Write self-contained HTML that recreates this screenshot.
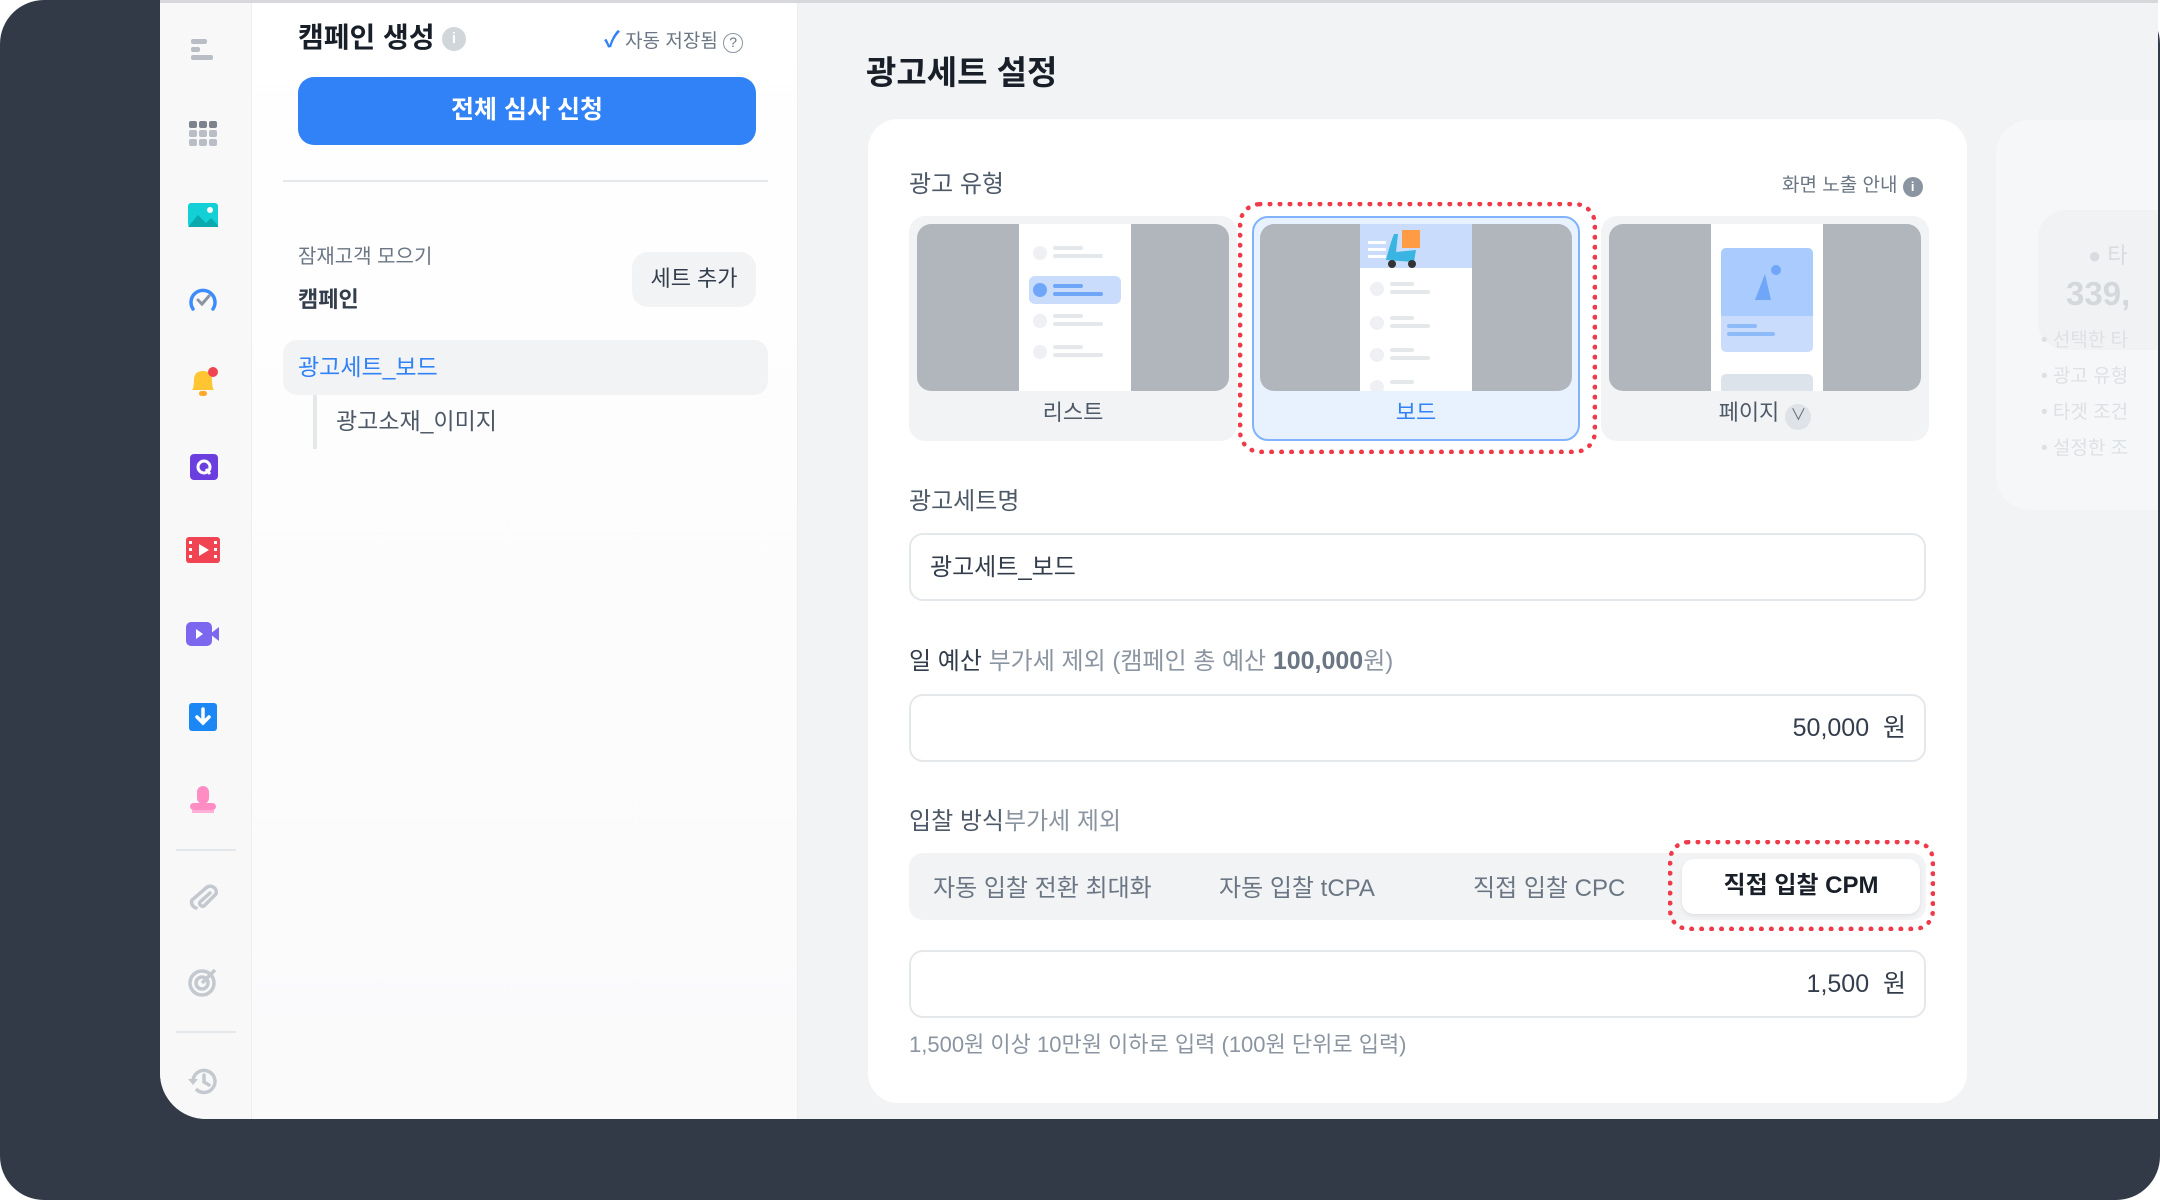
<!DOCTYPE html><html><head><meta charset="utf-8"><style>
*{box-sizing:border-box;margin:0;padding:0}
body{width:2160px;height:1200px;background:#fff;font-family:"Liberation Sans","Noto Sans CJK KR",sans-serif;position:relative;overflow:hidden}
.a{position:absolute}
.frame{left:0;top:0;width:2160px;height:1200px;background:#323a48;border-radius:44px}
.win{left:160px;top:0;width:1998px;height:1119px;background:#f2f3f5;border-bottom-left-radius:46px;overflow:hidden}
.side{left:0;top:0;width:92px;height:1119px;background:#f8f8f9;border-right:1px solid #eceef0}
.lp{left:92px;top:0;width:546px;height:1119px;background:linear-gradient(#fff,#fafafb);border-right:1px solid #eceef0}
.t{white-space:nowrap}
.card{left:708px;top:119px;width:1099px;height:984px;background:#fff;border-radius:30px}
.lab{font-size:24px;color:#4e5968}
.inp{left:41px;width:1017px;height:68px;border:2px solid #e5e8eb;border-radius:14px;background:#fff}
.tile{top:97px;width:328px;height:225px;background:#f2f3f5;border-radius:16px}
.img{left:8px;top:8px;width:312px;height:167px;background:#b1b6bd;border-radius:14px;overflow:hidden}
.col{position:absolute;left:102px;top:0;width:112px;height:167px;background:#fff}
.tl{position:absolute;left:0;width:100%;top:172px;height:50px;line-height:50px;text-align:center;font-size:22px;color:#4e5968}
.dot{position:absolute;width:14px;height:14px;border-radius:50%;background:#eef0f3}
.ln{position:absolute;height:4px;background:#e5e8eb;border-radius:2px}
</style></head><body>
<div class="a frame"></div>
<div class="a win">
 <div class="a side">
  <svg class="a" style="left:29px;top:36px" width="28" height="28"><rect x="2" y="3" width="16" height="5" rx="2" fill="#b9bec6"/><rect x="2" y="11" width="9" height="5" rx="2" fill="#b9bec6"/><rect x="2" y="19" width="22" height="5" rx="2" fill="#b9bec6"/></svg>
  <svg class="a" style="left:29px;top:121px" width="28" height="26"><g fill="#b9bec6"><rect x="0" y="0" width="8" height="7" rx="2" fill="#7d838c"/><rect x="10" y="0" width="8" height="7" rx="2" fill="#7d838c"/><rect x="20" y="0" width="8" height="7" rx="2" fill="#7d838c"/><rect x="0" y="9" width="8" height="7" rx="2"/><rect x="10" y="9" width="8" height="7" rx="2"/><rect x="20" y="9" width="8" height="7" rx="2"/><rect x="0" y="18" width="8" height="7" rx="2"/><rect x="10" y="18" width="8" height="7" rx="2"/><rect x="20" y="18" width="8" height="7" rx="2"/></g></svg>
  <svg class="a" style="left:28px;top:203px" width="30" height="26"><rect width="30" height="24" rx="3" fill="#13d0d6"/><path d="M0 24 L10 12 L18 20 L23 15 L30 22 V24Z" fill="#0aa9ae"/><circle cx="22" cy="7" r="3" fill="#fff"/></svg>
  <svg class="a" style="left:28px;top:285px" width="30" height="30"><path d="M5 24 A12 12 0 1 1 25 24" fill="none" stroke="#3d8bfd" stroke-width="3.5" stroke-linecap="round"/><path d="M10 15 L14 19 L21 11" fill="none" stroke="#8b95a1" stroke-width="3" stroke-linecap="round"/></svg>
  <svg class="a" style="left:28px;top:366px" width="32" height="34"><path d="M4 24 Q6 22 6 14 Q6 5 15 5 Q24 5 24 14 Q24 22 26 24Z" fill="#ffc533"/><rect x="11" y="25" width="8" height="5" rx="2.5" fill="#ffa826"/><circle cx="25" cy="6" r="5" fill="#f04452"/></svg>
  <svg class="a" style="left:30px;top:454px" width="28" height="26"><rect width="28" height="26" rx="4" fill="#6b3ee0"/><circle cx="14" cy="13" r="6" fill="none" stroke="#fff" stroke-width="3"/><path d="M16 15 L20 20" stroke="#fff" stroke-width="3"/></svg>
  <svg class="a" style="left:26px;top:537px" width="34" height="26"><rect width="34" height="26" rx="3" fill="#f04452"/><path d="M13 7 L23 13 L13 19Z" fill="#fff"/><g fill="#fff"><rect x="3" y="4" width="3" height="3"/><rect x="3" y="11" width="3" height="3"/><rect x="3" y="18" width="3" height="3"/><rect x="28" y="4" width="3" height="3"/><rect x="28" y="11" width="3" height="3"/><rect x="28" y="18" width="3" height="3"/></g></svg>
  <svg class="a" style="left:26px;top:622px" width="34" height="24"><rect width="26" height="24" rx="5" fill="#7c68ee"/><path d="M24 12 L33 5 V19Z" fill="#7c68ee"/><path d="M10 7 L17 12 L10 17Z" fill="#fff"/></svg>
  <svg class="a" style="left:29px;top:703px" width="28" height="28"><rect width="28" height="28" rx="3" fill="#1b87f5"/><path d="M14 6 V20 M8 14 L14 20 L20 14" fill="none" stroke="#fff" stroke-width="3.5" stroke-linecap="round"/></svg>
  <svg class="a" style="left:28px;top:784px" width="30" height="30"><rect x="9" y="2" width="12" height="18" rx="6" fill="#ff8dc3"/><rect x="2" y="19" width="26" height="7" rx="3.5" fill="#ff8dc3"/><rect x="4" y="26" width="22" height="3" fill="#ffb0d8"/></svg>
  <div class="a" style="left:16px;top:849px;width:60px;height:2px;background:#e5e8eb"></div>
  <svg class="a" style="left:26px;top:882px" width="36" height="32"><path d="M6 26 A6 6 0 0 1 2 18 L16 6 A6 6 0 0 1 26 12 L14 24 A3 3 0 0 1 10 20 L20 11" fill="none" stroke="#c4c9d0" stroke-width="3.5" stroke-linecap="round" transform="translate(4,0)"/></svg>
  <svg class="a" style="left:27px;top:966px" width="32" height="32"><circle cx="15" cy="17" r="12" fill="none" stroke="#c4c9d0" stroke-width="3.5"/><circle cx="15" cy="17" r="6" fill="none" stroke="#c4c9d0" stroke-width="3.5"/><path d="M15 17 L28 4" stroke="#c4c9d0" stroke-width="3.5"/></svg>
  <div class="a" style="left:16px;top:1031px;width:60px;height:2px;background:#e5e8eb"></div>
  <svg class="a" style="left:27px;top:1066px" width="32" height="30"><path d="M6 15 A11 11 0 1 1 9 23" fill="none" stroke="#c4c9d0" stroke-width="3.5"/><path d="M1 13 L6 19 L11 13Z" fill="#c4c9d0"/><path d="M17 9 V16 L22 19" fill="none" stroke="#c4c9d0" stroke-width="3.5" stroke-linecap="round"/></svg>
 </div>
 <div class="a lp">
  <div class="a t" style="left:46px;top:16px;font-size:28px;font-weight:700;color:#191f28">캠페인 생성</div>
  <div class="a" style="left:190px;top:27px;width:24px;height:24px;border-radius:50%;background:#d1d6db;color:#fff;font-size:15px;font-weight:700;text-align:center;line-height:24px">i</div>
  <div class="a t" style="left:352px;top:22px;font-size:19px;color:#6b7684"><span style="color:#3182f6;font-weight:700;font-size:22px">✓</span> 자동 저장됨 <span style="display:inline-block;width:20px;height:20px;border:1.5px solid #8b95a1;border-radius:50%;font-size:14px;text-align:center;line-height:17px">?</span></div>
  <div class="a" style="left:46px;top:77px;width:458px;height:68px;background:#3182f6;border-radius:16px;color:#fff;font-size:25px;font-weight:700;text-align:center;line-height:66px">전체 심사 신청</div>
  <div class="a" style="left:31px;top:180px;width:485px;height:2px;background:#e5e8eb"></div>
  <div class="a t" style="left:46px;top:240px;font-size:20px;color:#6b7684">잠재고객 모으기</div>
  <div class="a t" style="left:46px;top:282px;font-size:22px;font-weight:700;color:#333d4b">캠페인</div>
  <div class="a" style="left:380px;top:252px;width:124px;height:55px;background:#f2f3f5;border-radius:16px;font-size:22px;color:#333d4b;text-align:center;line-height:53px">세트 추가</div>
  <div class="a" style="left:31px;top:340px;width:485px;height:55px;background:#f2f3f5;border-radius:14px"></div>
  <div class="a t" style="left:46px;top:348px;font-size:23px;color:#3182f6">광고세트_보드</div>
  <div class="a" style="left:61px;top:395px;width:4px;height:54px;background:#e5e8eb"></div>
  <div class="a t" style="left:84px;top:402px;font-size:23px;color:#4e5968">광고소재_이미지</div>
 </div>
 <div class="a t" style="left:706px;top:46px;font-size:33px;font-weight:700;color:#191f28">광고세트 설정</div>
 <div class="a" style="left:1836px;top:120px;width:200px;height:390px;background:#f6f7f8;border-radius:34px">
  <div class="a" style="left:42px;top:90px;width:160px;height:140px;background:#f1f2f4;border-radius:28px"></div>
  <div class="a t" style="left:92px;top:118px;font-size:22px;color:#d8dbe0">● 타</div>
  <div class="a t" style="left:70px;top:155px;font-size:33px;font-weight:700;color:#d4d7dc">339,</div>
  <div class="a t" style="left:45px;top:203px;font-size:19px;line-height:36px;color:#dde0e4">• 선택한 타<br>• 광고 유형<br>• 타겟 조건<br>• 설정한 조</div>
 </div>
 <div class="a card">
  <div class="a t lab" style="left:41px;top:45px">광고 유형</div>
  <div class="a t" style="left:914px;top:51px;font-size:19px;color:#6b7684">화면 노출 안내 <span style="display:inline-block;width:20px;height:20px;border-radius:50%;background:#8b95a1;color:#fff;font-size:13px;font-weight:700;text-align:center;line-height:20px">i</span></div>
  <div class="a tile" style="left:41px">
   <div class="a img"><div class="col">
    <div class="dot" style="left:14px;top:22px"></div><div class="ln" style="left:34px;top:22px;width:30px"></div><div class="ln" style="left:34px;top:30px;width:50px"></div>
    <div style="position:absolute;left:10px;top:52px;width:92px;height:28px;background:#c9dcfb;border-radius:6px"></div>
    <div class="dot" style="left:14px;top:59px;background:#6fa6f8"></div><div class="ln" style="left:34px;top:60px;width:30px;background:#6fa6f8"></div><div class="ln" style="left:34px;top:68px;width:50px;background:#6fa6f8"></div>
    <div class="dot" style="left:14px;top:90px"></div><div class="ln" style="left:34px;top:90px;width:30px"></div><div class="ln" style="left:34px;top:98px;width:50px"></div>
    <div class="dot" style="left:14px;top:121px"></div><div class="ln" style="left:34px;top:121px;width:30px"></div><div class="ln" style="left:34px;top:129px;width:50px"></div>
   </div></div>
   <div class="tl">리스트</div>
  </div>
  <div class="a tile" style="left:384px;background:#e8f2fe;border:2px solid #80b3fb">
   <div class="a img" style="left:6px;top:6px"><div class="col" style="left:100px">
    <div style="position:absolute;left:0;top:0;width:112px;height:44px;background:#c9dcfb"></div>
    <svg style="position:absolute;left:4px;top:0" width="104" height="44"><rect x="4" y="17" width="18" height="3" fill="#fff"/><rect x="4" y="24" width="18" height="3" fill="#fff"/><rect x="4" y="31" width="18" height="3" fill="#fff"/><path d="M22 36 Q26 20 30 10 L34 10 L32 28 L52 26 L50 38Z" fill="#3ab4e0"/><rect x="38" y="6" width="18" height="18" fill="#ff9a45"/><circle cx="28" cy="40" r="4" fill="#333"/><circle cx="48" cy="40" r="4" fill="#333"/></svg>
    <div class="dot" style="left:10px;top:58px"></div><div class="ln" style="left:30px;top:58px;width:24px"></div><div class="ln" style="left:30px;top:66px;width:40px"></div>
    <div class="dot" style="left:10px;top:92px"></div><div class="ln" style="left:30px;top:92px;width:24px"></div><div class="ln" style="left:30px;top:100px;width:40px"></div>
    <div class="dot" style="left:10px;top:124px"></div><div class="ln" style="left:30px;top:124px;width:24px"></div><div class="ln" style="left:30px;top:132px;width:40px"></div>
    <div class="dot" style="left:10px;top:156px"></div><div class="ln" style="left:30px;top:156px;width:24px"></div>
   </div></div>
   <div class="tl" style="color:#3182f6;top:170px">보드</div>
  </div>
  <div class="a" style="left:370px;top:83px;width:359px;height:252px;border:5px dotted #ef3a4a;border-radius:22px"></div>
  <div class="a tile" style="left:733px">
   <div class="a img"><div class="col" style="left:102px">
    <div style="position:absolute;left:10px;top:24px;width:92px;height:104px;background:#c9dcfb;border-radius:5px"></div>
    <div style="position:absolute;left:10px;top:24px;width:92px;height:68px;background:#a9cbfd;border-radius:5px 5px 0 0"></div>
    <svg style="position:absolute;left:10px;top:24px" width="92" height="68"><path d="M34 52 L44 26 L50 52Z" fill="#6fa6f8"/><circle cx="55" cy="22" r="5" fill="#6fa6f8"/></svg>
    <div class="ln" style="left:16px;top:100px;width:30px;background:#8dbaf9"></div><div class="ln" style="left:16px;top:108px;width:48px;background:#8dbaf9"></div>
    <div style="position:absolute;left:10px;top:150px;width:92px;height:20px;background:#dde3ea;border-radius:5px"></div>
   </div></div>
   <div class="tl">페이지 <span style="display:inline-block;width:26px;height:26px;border-radius:50%;background:#dfe2e6;font-size:16px;line-height:24px;vertical-align:0;color:#6b7684">∨</span></div>
  </div>
  <div class="a t lab" style="left:41px;top:362px">광고세트명</div>
  <div class="a inp" style="top:414px"><div class="a t" style="left:19px;top:12px;font-size:24px;color:#333d4b">광고세트_보드</div></div>
  <div class="a t lab" style="left:41px;top:522px"><span style="color:#333d4b">일 예산</span> <span style="color:#8b95a1">부가세 제외 (캠페인 총 예산 </span> <span style="color:#6b7684;font-weight:700;font-size:25px">100,000</span><span style="color:#8b95a1">원)</span></div>
  <div class="a inp" style="top:575px"><div class="a t" style="right:18px;top:12px;font-size:25px;color:#333d4b">50,000 &nbsp;원</div></div>
  <div class="a t lab" style="left:41px;top:682px"><span style="color:#4e5968">입찰 방식</span><span style="color:#8b95a1">부가세 제외</span></div>
  <div class="a" style="left:41px;top:734px;width:1017px;height:67px;background:#f2f3f5;border-radius:14px">
   <div class="a t" style="left:24px;top:15px;font-size:24px;color:#6b7684">자동 입찰 전환 최대화</div>
   <div class="a t" style="left:310px;top:15px;font-size:24px;color:#6b7684">자동 입찰 tCPA</div>
   <div class="a t" style="left:564px;top:15px;font-size:24px;color:#6b7684">직접 입찰 CPC</div>
   <div class="a" style="left:773px;top:6px;width:238px;height:55px;background:#fff;border-radius:12px;box-shadow:0 2px 4px rgba(0,0,0,.08);text-align:center;line-height:53px;font-size:24px;font-weight:700;color:#191f28">직접 입찰 CPM</div>
  </div>
  <div class="a" style="left:800px;top:721px;width:267px;height:91px;border:5px dotted #ef3a4a;border-radius:20px"></div>
  <div class="a inp" style="top:831px"><div class="a t" style="right:18px;top:12px;font-size:25px;color:#333d4b">1,500 &nbsp;원</div></div>
  <div class="a t" style="left:41px;top:908px;font-size:22px;color:#8b95a1">1,500원 이상 10만원 이하로 입력 (100원 단위로 입력)</div>
 </div>
 <div class="a" style="left:0;top:0;width:1998px;height:3px;background:#d6d8dc"></div>
</div>
</body></html>
